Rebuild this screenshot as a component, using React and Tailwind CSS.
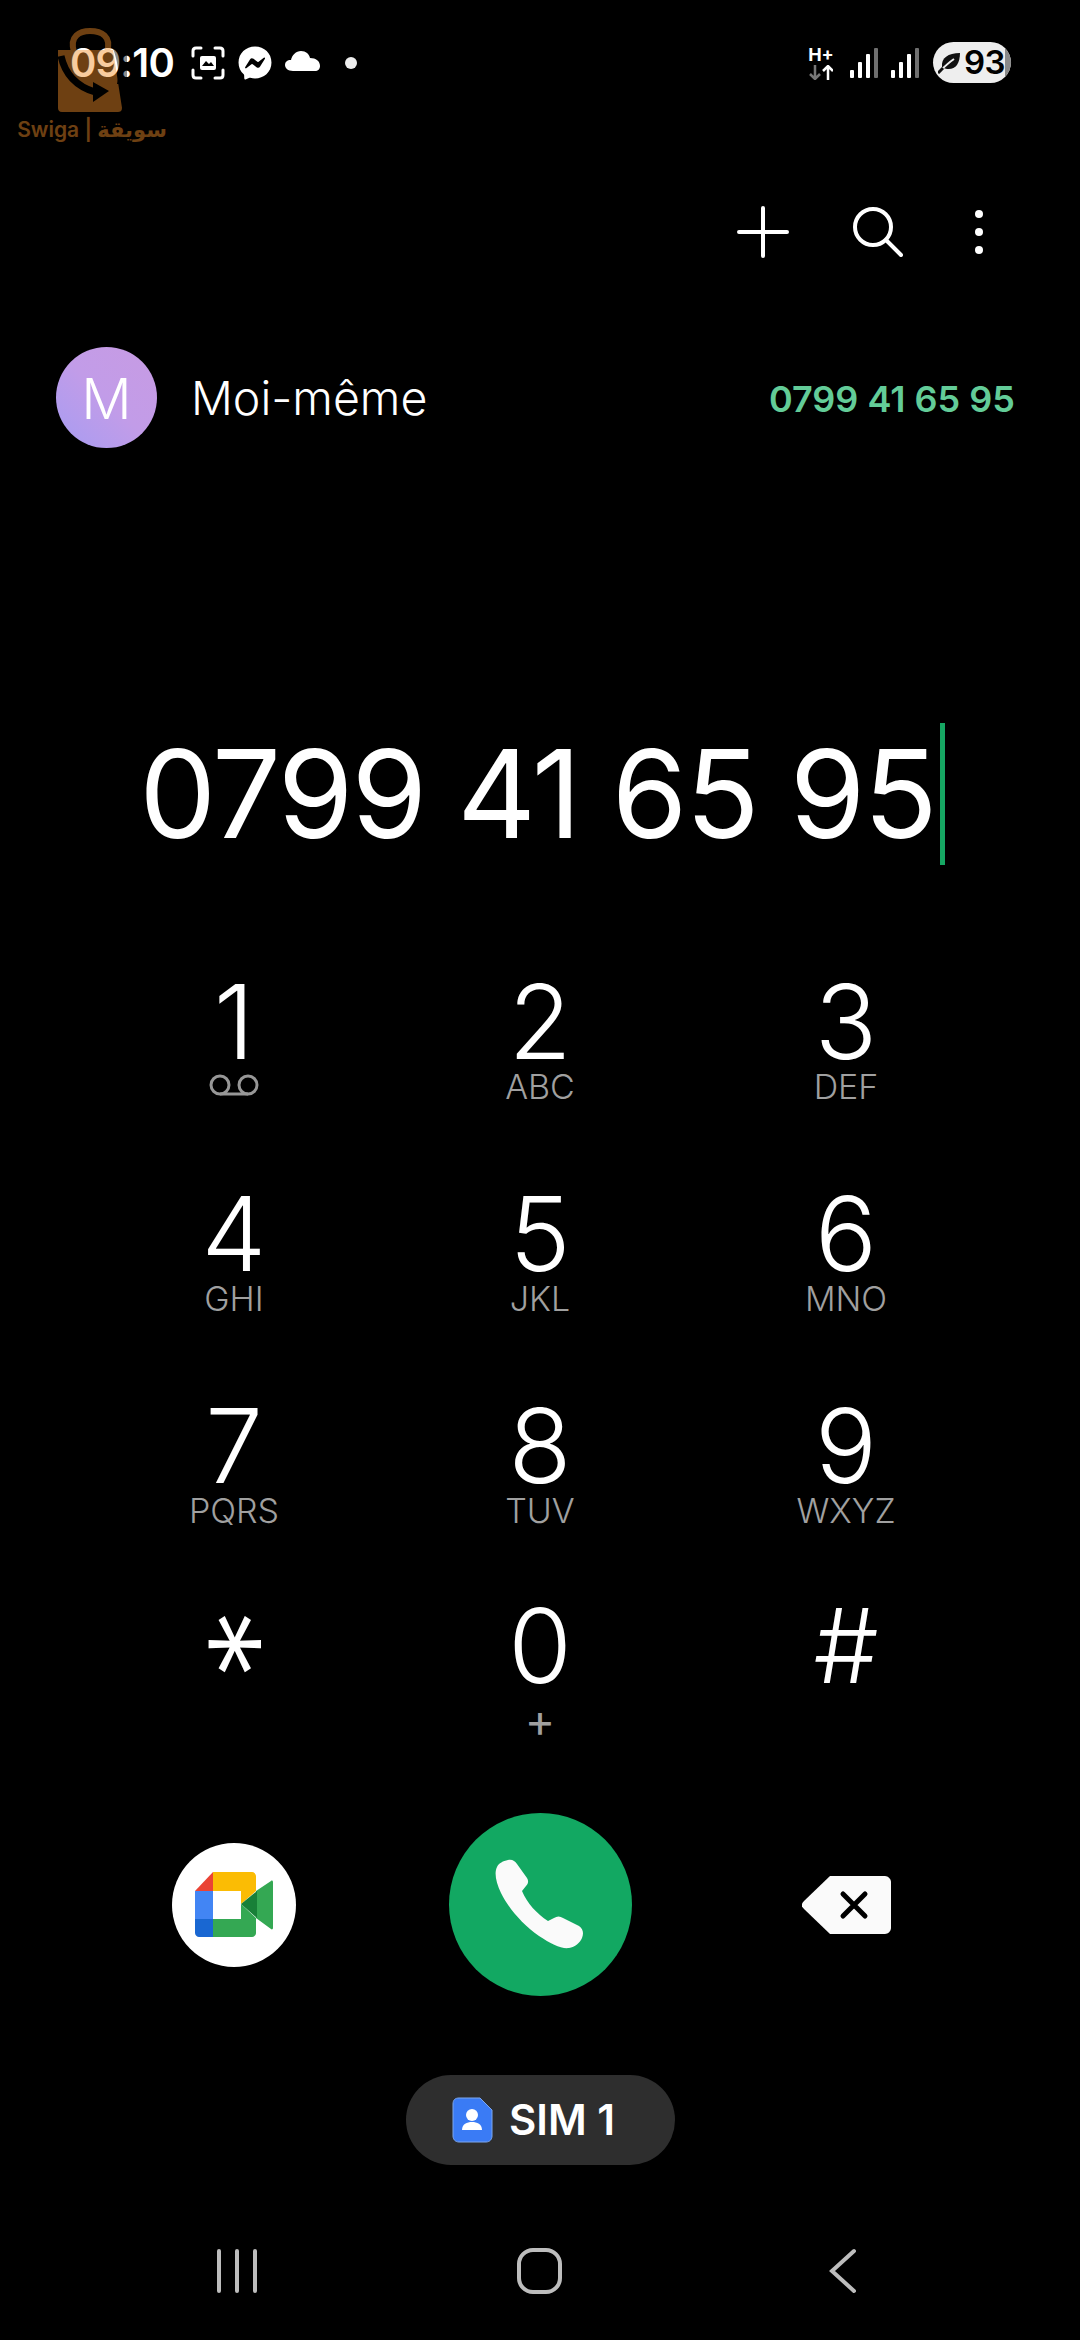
import React from 'react';
import { FaFacebookMessenger } from 'react-icons/fa';

const keys = [
  { digit: '1', icon: true },
  { digit: '2', sub: 'ABC' },
  { digit: '3', sub: 'DEF' },
  { digit: '4', sub: 'GHI' },
  { digit: '5', sub: 'JKL' },
  { digit: '6', sub: 'MNO' },
  { digit: '7', sub: 'PQRS' },
  { digit: '8', sub: 'TUV' },
  { digit: '9', sub: 'WXYZ' },
  { digit: '*' },
  { digit: '0', plus: true },
  { digit: '#' },
];

const SignalBars = () => (
  <svg width="28" height="30" viewBox="0 0 28 30">
    <rect x="0" y="22" width="4" height="8" rx="1" fill="#fff" />
    <rect x="8" y="14" width="4" height="16" rx="1" fill="#fff" />
    <rect x="16" y="6" width="4" height="24" rx="1" fill="#fff" />
    <rect x="24" y="0" width="4" height="30" rx="1" fill="#6f6f6f" />
  </svg>
);

const Voicemail = () => (
  <svg width="50" height="22" viewBox="0 0 50 22" fill="none" stroke="#979797" strokeWidth="3">
    <circle cx="11" cy="11" r="9" />
    <circle cx="39" cy="11" r="9" />
    <path d="M11 20H39" />
  </svg>
);

const Key = ({ digit, sub, icon, plus }) => (
  <div className="flex flex-col items-center">
    {digit === '*' ? (
      <div className="flex items-center justify-center h-[100px] w-[100px]">
        <span className="block text-[128px] leading-[100px] h-[100px] font-light text-white [transform:translate(-20px,-2px)_scaleY(1.15)_rotate(90deg)]">*</span>
      </div>
    ) : (
      <div className="h-[100px] text-[103px] leading-[100px] font-[350] text-white">{digit}</div>
    )}
    {sub && <div className="-mt-[2px] text-[34px] leading-none font-[350] text-[#a0a0a0]">{sub}</div>}
    {plus && <div className="mt-[1px] text-[46px] leading-none font-normal text-[#a0a0a0]">+</div>}
    {icon && <div className="mt-[2px]"><Voicemail /></div>}
  </div>
);

const Logo = () => (
  <div className="absolute left-[17px] top-[28px] w-[150px] flex flex-col items-center opacity-45 text-[#f38f29] pointer-events-none">
    <svg width="150" height="86" viewBox="0 0 150 86" className="block">
      <path d="M57 24C52 8 63 3 73 3C84 3 95 8 90 24" fill="none" stroke="#f38f29" strokeWidth="6" />
      <path d="M41 22H96L105 80C105 83 103 84 101 84H45C42 84 41 82 41 80Z" fill="#f38f29" />
      <path d="M44 28C48 46 58 58 78 64" fill="none" stroke="#000" strokeWidth="7" />
      <path d="M76 54L92 63L76 74Z" fill="#000" />
      <path d="M96 20H110V56H100C103 44 100 32 96 20Z" fill="#000" />
    </svg>
    <div className="mt-[5px] text-[21px] leading-none font-semibold whitespace-nowrap" style={{ fontFamily: 'Inter, "DejaVu Sans", sans-serif' }}>
      Swiga | سويقة
    </div>
  </div>
);

export default function App() {
  return (
    <div className="relative w-[1080px] h-[2340px] bg-black overflow-hidden text-white font-['Inter','Noto_Sans',sans-serif]">
      {/* status bar */}
      <div className="flex items-center justify-between h-[41px] mt-[42px] pl-[70px] pr-[69px]">
        <div className="flex items-center">
          <span className="text-[40px] leading-none font-semibold tracking-[-0.8px]">09:10</span>
          <svg className="ml-[17px]" width="34" height="34" viewBox="0 0 34 34" fill="none">
            <path d="M10 2H5C3 2 2 3 2 5V10M24 2H29C31 2 32 3 32 5V10M2 24V29C2 31 3 32 5 32H10M32 24V29C32 31 31 32 29 32H24" stroke="#fff" strokeWidth="3" strokeLinecap="round" />
            <rect x="9" y="10" width="16" height="14" rx="2" fill="#fff" />
            <path d="M11 20L15 15L18 18L20 16L23 20Z" fill="#000" />
          </svg>
          <FaFacebookMessenger className="ml-[13px] text-[34px] text-white" />
          <svg className="ml-[13px] mb-[3px]" width="35" height="20" viewBox="0 0 35 20">
            <path d="M8 20C3 20 0 17 0 14C0 11 2 9 6 9C7 4 11 0 16 0C21 0 24 3 25 7C31 7 35 10 35 15C35 18 33 20 30 20Z" fill="#fff" />
          </svg>
          <span className="ml-[25px] w-[12px] h-[12px] rounded-full bg-[#eee]" />
        </div>
        <div className="flex items-center">
          <div className="flex flex-col items-center w-[24px] mr-[17px]">
            <span className="text-[18px] leading-none font-bold">H+</span>
            <svg className="mt-[1px]" width="24" height="15" viewBox="0 0 24 15" fill="none" strokeWidth="2.5">
              <path d="M6 0V14M1 9L6 14L11 9" stroke="#777" />
              <path d="M19 15V1M14 6L19 1L24 6" stroke="#fff" />
            </svg>
          </div>
          <SignalBars />
          <div className="ml-[13px]"><SignalBars /></div>
          <div className="relative ml-[14px] flex items-center w-[78px] h-[41px] rounded-full bg-[#eeeeee] overflow-hidden text-black">
            <svg className="ml-[5px]" width="22" height="22" viewBox="0 0 22 22">
              <path d="M4 15C3 6 10 1 22 1C22 12 17 18 9 17L5 16Z" fill="#111" />
              <path d="M0 21C5 16 10 11 16 7" stroke="#eee" strokeWidth="2" fill="none" />
              <path d="M0 21L5 16" stroke="#111" strokeWidth="3" fill="none" />
            </svg>
            <span className="ml-[4px] text-[33px] leading-none font-semibold tracking-[-0.5px]">93</span>
            <span className="absolute right-0 top-0 h-full w-[6px] bg-[#8a8a8a]" />
          </div>
        </div>
      </div>

      <Logo />

      {/* actions */}
      <div className="flex items-center justify-end h-[52px] mt-[123px] pr-[97px]">
        <svg width="52" height="52" viewBox="0 0 52 52" stroke="#fff" strokeWidth="4" strokeLinecap="round">
          <path d="M26 2V50M2 26H50" />
        </svg>
        <svg className="ml-[64px]" width="50" height="50" viewBox="0 0 50 50" fill="none" stroke="#fff" strokeWidth="4" strokeLinecap="round">
          <circle cx="20" cy="20" r="18" />
          <path d="M33 33L48 48" />
        </svg>
        <svg className="ml-[72px]" width="8" height="44" viewBox="0 0 8 44" fill="#fff">
          <circle cx="4" cy="4" r="4" />
          <circle cx="4" cy="22" r="4" />
          <circle cx="4" cy="40" r="4" />
        </svg>
      </div>

      {/* contact */}
      <div className="flex items-center mt-[89px] pl-[56px] pr-[65px]">
        <div className="flex items-center justify-center w-[101px] h-[101px] rounded-full bg-linear-to-bl from-[#c79be3] via-[#c29ce8] to-[#a69cf2] text-[56px] leading-none font-light pt-[3px]">M</div>
        <div className="ml-[34px] text-[46.5px] leading-none font-[350] pt-[2px]">Moi-même</div>
        <div className="ml-auto text-[36px] leading-none font-semibold text-[#63cc98] pt-[2px]">0799 41 65 95</div>
      </div>

      {/* number */}
      <div className="flex items-center justify-center h-[142px] mt-[275px] pl-[4px]">
        <span className="text-[122px] leading-none font-[380] tracking-[-2px] whitespace-nowrap">0799 41 65 95</span>
        <span className="w-[5px] h-[142px] ml-[4px] bg-[#16a763]" />
      </div>

      {/* keypad */}
      <div className="grid grid-cols-3 grid-rows-[212px_212px_200px_auto] mt-[107px] px-[81px] h-[719px]">
        {keys.map((k) => (
          <Key key={k.digit} {...k} />
        ))}
      </div>

      {/* call row */}
      <div className="grid grid-cols-3 items-center px-[81px] h-[183px] mt-[122px]">
        <div className="flex justify-center">
          <div className="w-[124px] h-[124px] rounded-full bg-white">
            <svg width="124" height="124" viewBox="0 0 124 124">
              <path d="M41 29H80C82 29 84 31 84 33V48L69 61V48H41Z" fill="#fbbc04" />
              <path d="M23 48L41 29V48Z" fill="#ea4335" />
              <rect x="23" y="48" width="18" height="28" fill="#4285f4" />
              <path d="M23 76H41V94H27C25 94 23 92 23 90Z" fill="#1967d2" />
              <path d="M41 76H69V61L84 75V90C84 92 82 94 80 94H41Z" fill="#34a853" />
              <path d="M84 48L99 38C100 37 101 38 101 39V85C101 86 100 87 99 86L84 75Z" fill="#34a853" />
              <path d="M69 61L85 48V75Z" fill="#188038" />
            </svg>
          </div>
        </div>
        <div className="flex justify-center">
          <div className="flex items-center justify-center w-[183px] h-[183px] rounded-full bg-[#12a862]">
            <svg width="90" height="90" viewBox="0 0 90 90" className="mb-[2px]">
              <path d="M13 1C17 0 20 2 22 5L32 19C34 22 33 25 31 27L27 32C32 44 42 55 53 62L59 59C62 57 65 57 68 59L84 67C88 70 89 74 87 79C85 84 80 88 74 89C66 90 56 85 44 77C28 66 14 50 6 34C1 24 -1 14 2 8C4 4 8 2 13 1Z" fill="#fafafa" />
            </svg>
          </div>
        </div>
        <div className="flex justify-center">
          <svg width="89" height="58" viewBox="0 0 89 58">
            <path d="M28 0H83C86 0 89 3 89 6V52C89 55 86 58 83 58H28L2 33C-1 30 -1 28 2 25Z" fill="#fafafa" />
            <path d="M41 18L63 40M63 18L41 40" stroke="#000" strokeWidth="5" strokeLinecap="round" />
          </svg>
        </div>
      </div>

      {/* sim */}
      <div className="flex justify-center mt-[79px]">
        <div className="flex items-center justify-center gap-[16px] w-[269px] h-[90px] rounded-full bg-[#2e2e2e] ml-[1px] pr-[14px]">
          <svg width="41" height="46" viewBox="0 0 41 46">
            <path d="M7 1H28L40 13V39C40 42 38 45 34 45H7C3 45 1 42 1 39V7C1 3 3 1 7 1Z" fill="#3a7bf5" stroke="#7da7ee" strokeWidth="1" />
            <circle cx="20" cy="18" r="6" fill="#fff" />
            <path d="M10 33C10 27 15 25 20 25C25 25 30 27 30 33Z" fill="#fff" />
          </svg>
          <span className="text-[42px] leading-none font-semibold">SIM 1</span>
        </div>
      </div>

      {/* nav */}
      <div className="grid grid-cols-3 items-center px-[81px] h-[46px] mt-[83px]">
        <div className="flex justify-center">
          <svg className="ml-[5px]" width="42" height="46" viewBox="0 0 42 46" stroke="#bdbdbd" strokeWidth="4" strokeLinecap="round">
            <path d="M3 3V43M21 3V43M39 3V43" />
          </svg>
        </div>
        <div className="flex justify-center">
          <div className="w-[45px] h-[46px] rounded-[16px] border-[4px] border-[#bdbdbd] -ml-[2px]" />
        </div>
        <div className="flex justify-center">
          <svg className="-ml-[6px]" width="28" height="46" viewBox="0 0 28 46" fill="none" stroke="#bdbdbd" strokeWidth="4" strokeLinecap="round">
            <path d="M25 3L3 23L25 43" />
          </svg>
        </div>
      </div>
    </div>
  );
}
